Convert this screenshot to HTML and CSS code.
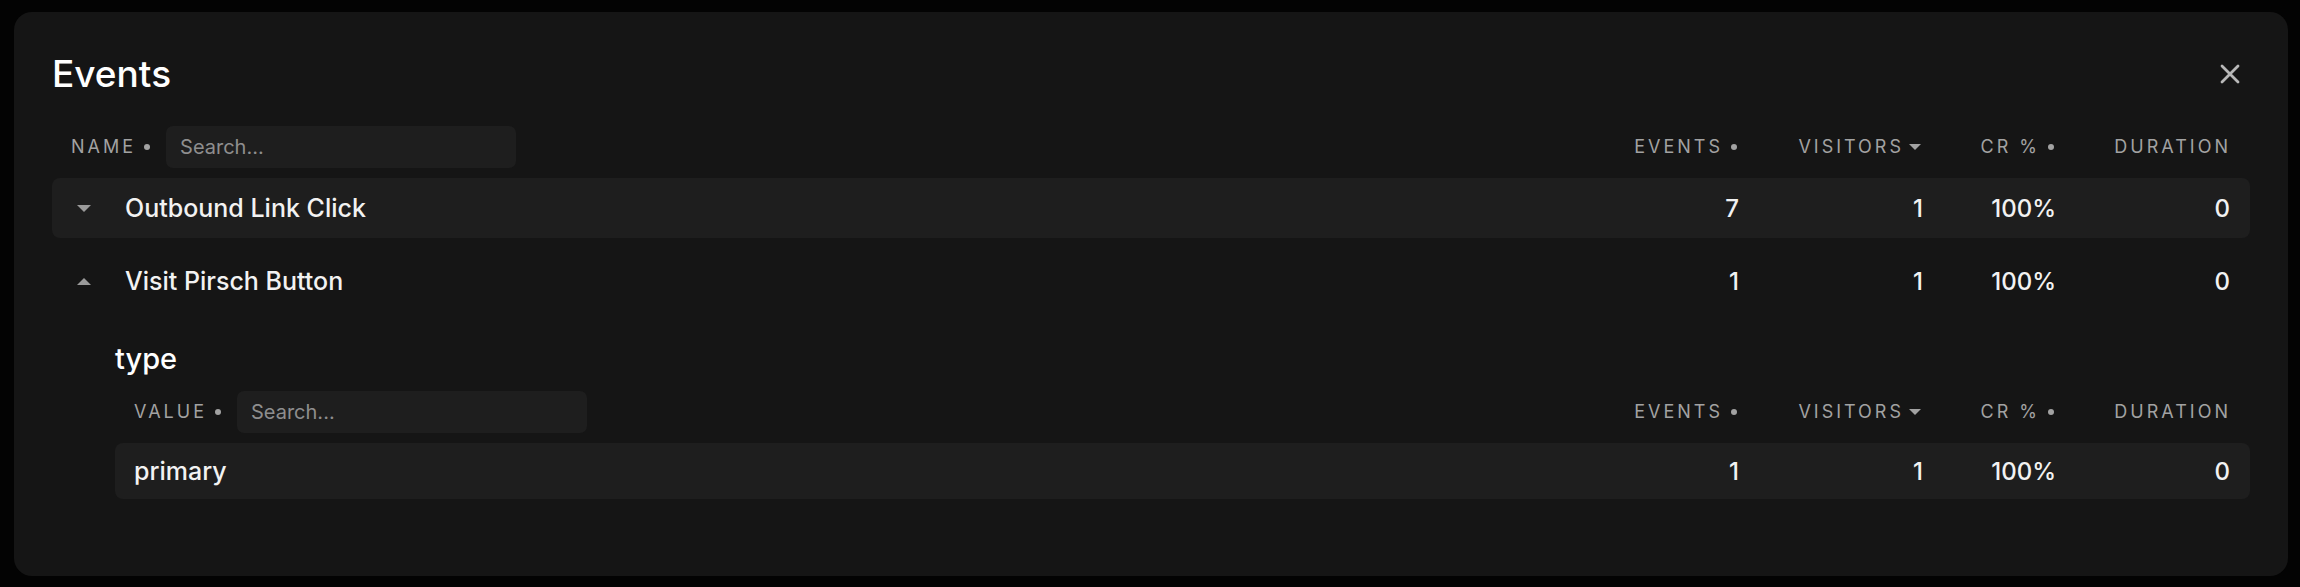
FILE: index.html
```html
<!DOCTYPE html>
<html lang="en">
<head>
<meta charset="utf-8">
<title>Events</title>
<link rel="stylesheet" href="styles.css">
</head>
<body>
<div class="modal">
  <div class="modal-head">
    <h2 class="title">Events</h2>
    <button class="close" aria-label="Close">
      <svg width="20" height="20" viewBox="0 0 20 20"><path d="M2 2 L18 18 M18 2 L2 18" stroke="#b8b8b8" stroke-width="2.8" stroke-linecap="round" fill="none"/></svg>
    </button>
  </div>

  <div class="table">
    <div class="grid thead">
      <div class="cell first"><span class="label">NAME</span><span class="dot"></span><input class="search" type="text" placeholder="Search..."></div>
      <div class="cell num"><span class="label">EVENTS</span><span class="dot"></span></div>
      <div class="cell num"><span class="label">VISITORS</span><span class="caret"></span></div>
      <div class="cell num"><span class="label">CR %</span><span class="dot"></span></div>
      <div class="cell num"><span class="label last">DURATION</span></div>
    </div>

    <div class="grid row hl first-row">
      <div class="cell first"><span class="tri down"></span><span class="name">Outbound Link Click</span></div>
      <div class="cell num">7</div>
      <div class="cell num">1</div>
      <div class="cell num">100%</div>
      <div class="cell num">0</div>
    </div>

    <div class="grid row second-row">
      <div class="cell first"><span class="tri up"></span><span class="name">Visit Pirsch Button</span></div>
      <div class="cell num">1</div>
      <div class="cell num">1</div>
      <div class="cell num">100%</div>
      <div class="cell num">0</div>
    </div>

    <div class="nested">
      <h3 class="sub">type</h3>
      <div class="grid thead">
        <div class="cell first"><span class="label">VALUE</span><span class="dot"></span><input class="search" type="text" placeholder="Search..."></div>
        <div class="cell num"><span class="label">EVENTS</span><span class="dot"></span></div>
        <div class="cell num"><span class="label">VISITORS</span><span class="caret"></span></div>
        <div class="cell num"><span class="label">CR %</span><span class="dot"></span></div>
        <div class="cell num"><span class="label last">DURATION</span></div>
      </div>
      <div class="grid row hl small">
        <div class="cell first"><span class="name">primary</span></div>
        <div class="cell num">1</div>
        <div class="cell num">1</div>
        <div class="cell num">100%</div>
        <div class="cell num">0</div>
      </div>
    </div>
  </div>
</div>
</body>
</html>
```

FILE: styles.css
```css
* { box-sizing: border-box; }

html, body {
  margin: 0;
  background: #030303;
}

body {
  padding: 12px 12px 11px 14px;
  font-family: Inter, "Liberation Sans", sans-serif;
  color: #f2f2f2;
}

.modal {
  background: #151515;
  border-radius: 18px;
  padding: 40px 38px 77px 38px;
  height: 564px;
}

.modal-head {
  display: flex;
  align-items: center;
  justify-content: space-between;
  height: 44px;
}

.title {
  margin: 0;
  font-size: 37px;
  line-height: 44px;
  font-weight: 500;
  color: #ffffff;
}

.close {
  width: 40px;
  height: 40px;
  padding: 0;
  border: 0;
  background: transparent;
  display: flex;
  align-items: center;
  justify-content: center;
}

.table {
  margin-top: 30px;
}

.grid {
  display: grid;
  grid-template-columns: 1fr 184px 184px 133px 174px;
  align-items: center;
  padding: 0 20px 0 19px;
}

.thead {
  height: 42px;
}

.thead .cell.num {
  padding-right: 2px;
}

.cell {
  display: flex;
  align-items: center;
  min-width: 0;
}

.cell.num {
  justify-content: flex-end;
  font-size: 24px;
  font-weight: 500;
}

.label {
  font-size: 18px;
  letter-spacing: 3px;
  color: #a2a2a2;
  font-weight: 400;
  line-height: 1;
}

.label.last {
  margin-right: -3px;
}

.dot {
  width: 6px;
  height: 6px;
  border-radius: 50%;
  background: #a2a2a2;
  margin-left: 8px;
  flex: none;
}

.caret {
  width: 0;
  height: 0;
  border-left: 6px solid transparent;
  border-right: 6px solid transparent;
  border-top: 6px solid #a2a2a2;
  margin-left: 5px;
  flex: none;
}

.search {
  margin-left: 16px;
  width: 350px;
  height: 42px;
  border: 0;
  border-radius: 7px;
  background: #1e1e1e;
  color: #ddd;
  font-family: Inter, "Liberation Sans", sans-serif;
  font-size: 20px;
  padding: 0 14px;
  outline: none;
}

.search::placeholder {
  color: #8e8e8e;
}

.row {
  height: 60px;
  border-radius: 8px;
}

.row.hl {
  background: #1e1e1e;
}

.first-row { margin-top: 10px; }
.second-row { margin-top: 13px; }

.tri {
  width: 0;
  height: 0;
  border-left: 7px solid transparent;
  border-right: 7px solid transparent;
  flex: none;
  margin-left: 6px;
  margin-right: 34px;
}

.tri.down { border-top: 7px solid #9a9a9a; }
.tri.up { border-bottom: 7px solid #9a9a9a; }

.name {
  font-size: 25px;
  font-weight: 500;
  color: #f2f2f2;
  white-space: nowrap;
}

.nested {
  margin-left: 63px;
  margin-top: 32px;
}

.sub {
  margin: 0 0 16px 0;
  font-size: 29px;
  line-height: 32px;
  font-weight: 500;
  color: #ffffff;
}

.nested .row.small {
  height: 56px;
  margin-top: 10px;
}
```
